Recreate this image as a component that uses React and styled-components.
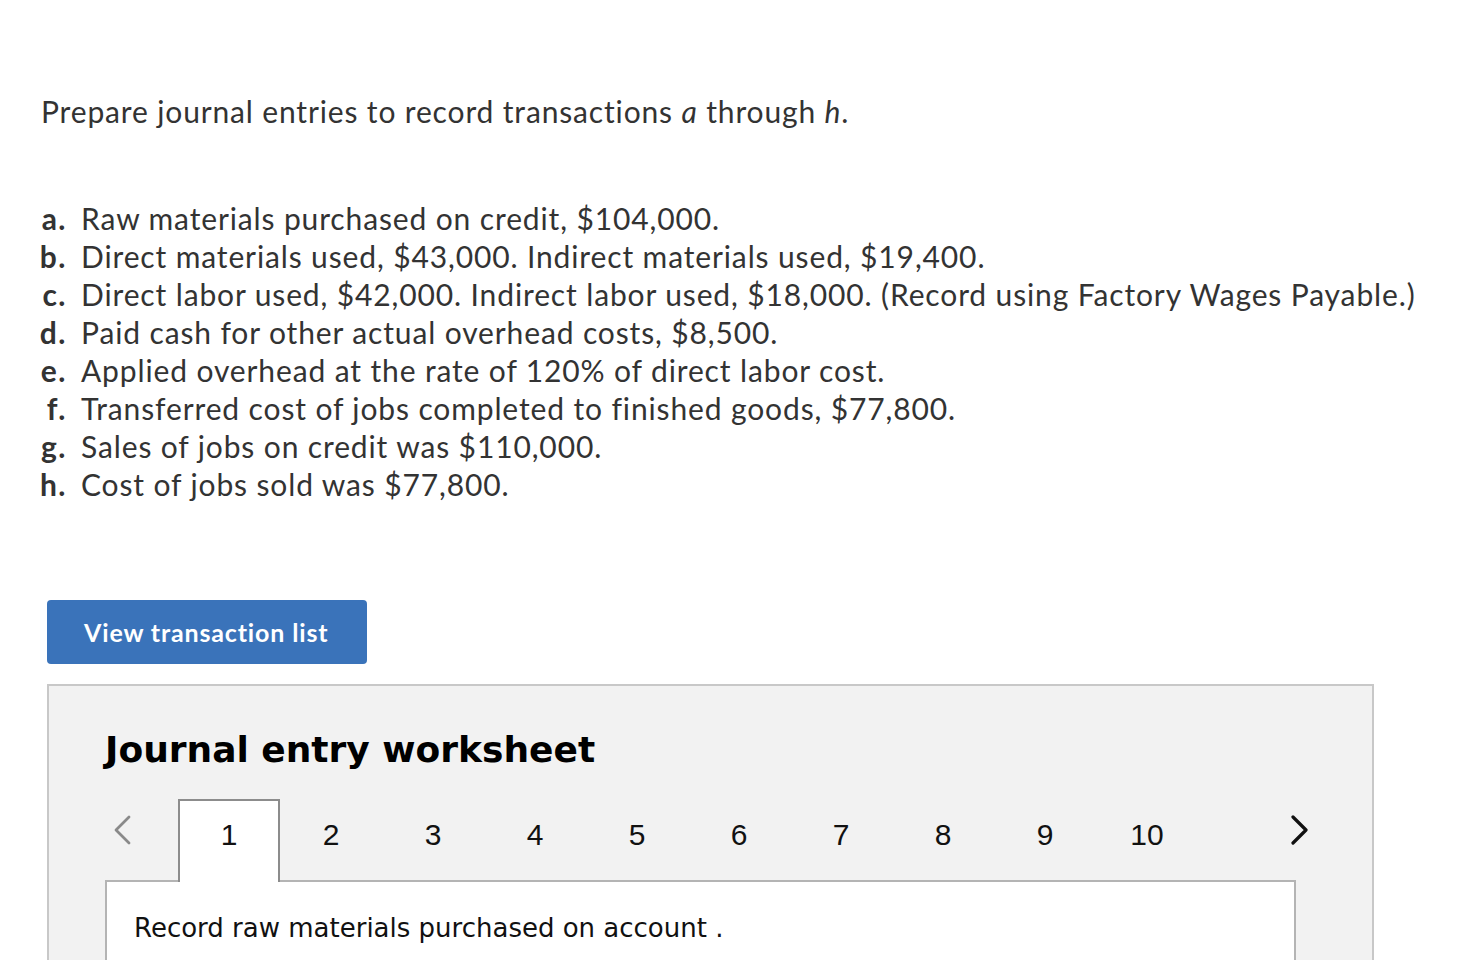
import React from "react";
import styled, { createGlobalStyle } from "styled-components";

const Global = createGlobalStyle`
  html, body { margin: 0; padding: 0; background: #fff; }
  body { font-family: "Lato", "Open Sans", sans-serif; color: #333; }
`;

const Page = styled.div`
  width: 1466px;
  height: 960px;
  overflow: hidden;
  padding: 90px 0 0 0;
  box-sizing: border-box;
`;

const Prompt = styled.p`
  margin: 0 0 0 41px;
  font-size: 30px;
  letter-spacing: 0.85px;
  line-height: 42px;
  color: #333;
  em { font-style: italic; }
`;

const List = styled.div`
  margin: 67px 0 0 0;
  display: grid;
  grid-template-columns: 67px 1fr;
  column-gap: 14px;
  row-gap: 0;
`;

const Letter = styled.span`
  text-align: right;
  font-weight: 700;
  font-size: 30px;
  letter-spacing: 1.5px;
  line-height: 38px;
  color: #333;
`;

const Item = styled.span`
  font-size: 30px;
  letter-spacing: 0.87px;
  line-height: 38px;
  color: #333;
`;

const Button = styled.button`
  margin: 97px 0 0 47px;
  width: 320px;
  height: 64px;
  background: #3a73ba;
  border: none;
  border-radius: 4px;
  color: #fff;
  font-family: "Lato", sans-serif;
  font-weight: 700;
  font-size: 25px;
  letter-spacing: 0.85px;
  text-align: left;
  padding: 0 0 0 37px;
  display: block;
`;

const Panel = styled.section`
  margin: 20px 0 0 47px;
  width: 1327px;
  height: 400px;
  box-sizing: border-box;
  background: #f2f2f2;
  border: 2px solid #c8c8c8;
  padding: 40px 76px 0 56px;
`;

const Title = styled.h2`
  margin: 0;
  font-family: "DejaVu Sans", Verdana, sans-serif;
  font-weight: 700;
  font-size: 36px;
  line-height: 48px;
  color: #000;
`;

const TabRow = styled.div`
  margin-top: 25px;
  display: flex;
  align-items: stretch;
  height: 83px;
  position: relative;
  z-index: 1;
`;

const Chevron = styled.div`
  width: 73px;
  display: flex;
  justify-content: flex-start;
  padding: 16px 0 0 7px;
  box-sizing: border-box;
  color: ${(p) => (p.$disabled ? "#8a8a8a" : "#111")};
`;

const Tab = styled.div`
  width: 102px;
  box-sizing: border-box;
  display: flex;
  justify-content: center;
  padding-top: 18px;
  font-family: "Liberation Sans Narrow", "Liberation Sans", sans-serif;
  font-size: 30px;
  line-height: 32px;
  color: #111;
  background: ${(p) => (p.$active ? "#fff" : "transparent")};
  border: 2px solid ${(p) => (p.$active ? "#8c8c8c" : "transparent")};
  border-bottom: none;
`;

const Spacer = styled.div`
  flex: 1;
`;

const RightChevron = styled(Chevron)`
  width: auto;
  padding: 16px 0 0 0;
  margin-right: -14px;
`;

const Content = styled.div`
  margin-top: -2px;
  width: 1191px;
  height: 200px;
  box-sizing: border-box;
  background: #fff;
  border: 2px solid #b4b4b4;
  padding: 28px 0 0 27px;
  font-family: "DejaVu Sans", Verdana, sans-serif;
  font-size: 26px;
  line-height: 36px;
  color: #111;
`;

const items = [
  ["a.", "Raw materials purchased on credit, $104,000."],
  ["b.", "Direct materials used, $43,000. Indirect materials used, $19,400."],
  ["c.", "Direct labor used, $42,000. Indirect labor used, $18,000. (Record using Factory Wages Payable.)"],
  ["d.", "Paid cash for other actual overhead costs, $8,500."],
  ["e.", "Applied overhead at the rate of 120% of direct labor cost."],
  ["f.", "Transferred cost of jobs completed to finished goods, $77,800."],
  ["g.", "Sales of jobs on credit was $110,000."],
  ["h.", "Cost of jobs sold was $77,800."],
];

const ChevronLeftIcon = () => (
  <svg width="20" height="30" viewBox="0 0 20 30" fill="none">
    <path d="M17 2 L4 15 L17 28" stroke="currentColor" strokeWidth="2.8" strokeLinecap="round" strokeLinejoin="round" />
  </svg>
);
const ChevronRightIcon = () => (
  <svg width="20" height="30" viewBox="0 0 20 30" fill="none">
    <path d="M3 2 L16 15 L3 28" stroke="currentColor" strokeWidth="3.2" strokeLinecap="round" strokeLinejoin="round" />
  </svg>
);

export default function App() {
  return (
    <Page>
      <Global />
      <Prompt>
        Prepare journal entries to record transactions <em>a</em> through <em>h</em>.
      </Prompt>
      <List>
        {items.map(([l, t]) => (
          <React.Fragment key={l}>
            <Letter>{l}</Letter>
            <Item>{t}</Item>
          </React.Fragment>
        ))}
      </List>
      <Button>View transaction list</Button>
      <Panel>
        <Title>Journal entry worksheet</Title>
        <TabRow>
          <Chevron $disabled>
            <ChevronLeftIcon />
          </Chevron>
          {[1, 2, 3, 4, 5, 6, 7, 8, 9, 10].map((n) => (
            <Tab key={n} $active={n === 1}>
              {n}
            </Tab>
          ))}
          <Spacer />
          <RightChevron>
            <ChevronRightIcon />
          </RightChevron>
        </TabRow>
        <Content>Record raw materials purchased on account .</Content>
      </Panel>
    </Page>
  );
}
